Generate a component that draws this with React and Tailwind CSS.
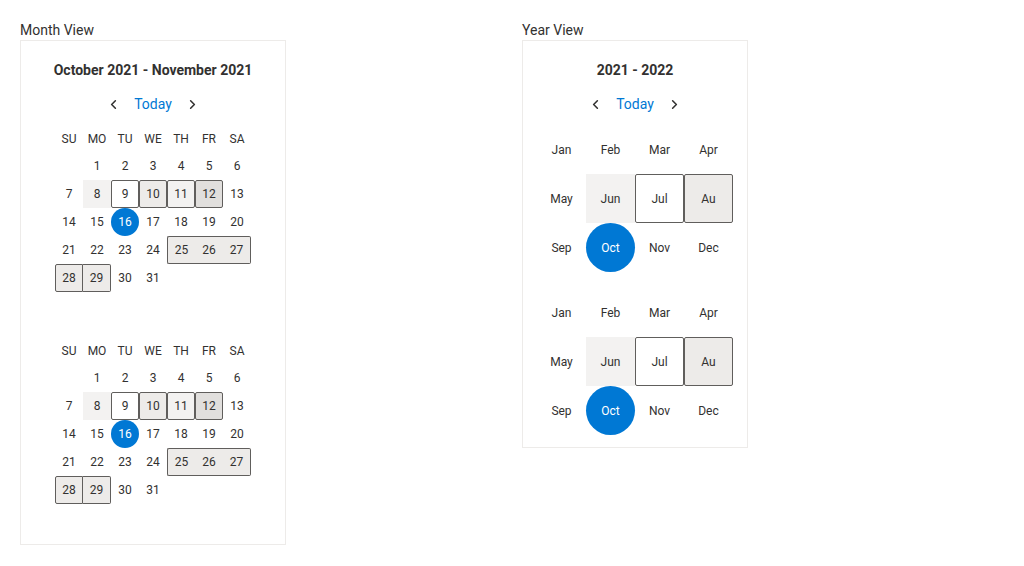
import { ChevronLeft, ChevronRight } from "lucide-react";

const DAYS = ["SU", "MO", "TU", "WE", "TH", "FR", "SA"];
const MONTHS = ["Jan", "Feb", "Mar", "Apr", "May", "Jun", "Jul", "Au", "Sep", "Oct", "Nov", "Dec"];

// per-date look, same for both months
const dayStyle = {
  8: "bg-[#f3f2f1]",
  9: "bg-white border border-[#605e5c] rounded-[2px]",
  10: "bg-[#edebe9] border border-[#605e5c] rounded-[2px]",
  11: "bg-[#f3f2f1] border border-[#605e5c] rounded-[2px]",
  12: "bg-[#e1dfdd] border border-[#605e5c] rounded-[2px]",
  16: "bg-[#0078d4] text-white rounded-full",
  25: "bg-[#edebe9] border-y border-l border-[#605e5c] rounded-l-[2px]",
  26: "bg-[#edebe9] border-y border-[#605e5c]",
  27: "bg-[#edebe9] border-y border-r border-[#605e5c] rounded-r-[2px]",
  28: "bg-[#edebe9] border border-[#605e5c] rounded-l-[2px]",
  29: "bg-[#edebe9] border-y border-r border-[#605e5c] rounded-r-[2px]",
};

const monthStyle = {
  Jun: "bg-[#f3f2f1]",
  Jul: "bg-white border border-[#605e5c] rounded-[2px]",
  Au: "bg-[#edebe9] border border-[#605e5c] rounded-[2px]",
  Oct: "bg-[#0078d4] text-white rounded-full",
};

function Nav() {
  return (
    <div className="flex items-center justify-center h-7 mt-[10px]">
      <button className="w-7 h-7 flex items-center justify-center text-[#323130]">
        <ChevronLeft size={15} strokeWidth={2.5} />
      </button>
      <button className="px-[7px] text-[14px] text-[#0078d4]">Today</button>
      <button className="w-7 h-7 flex items-center justify-center text-[#323130]">
        <ChevronRight size={15} strokeWidth={2.5} />
      </button>
    </div>
  );
}

function MonthGrid({ className }) {
  const cells = [null, ...Array.from({ length: 31 }, (_, i) => i + 1)];
  return (
    <div className={`w-[196px] mx-auto ${className}`}>
      <div className="grid grid-cols-7 h-[26px] items-center">
        {DAYS.map((d) => (
          <div key={d} className="text-center text-[12px]">{d}</div>
        ))}
      </div>
      <div className="grid grid-cols-7">
        {cells.map((n, i) => (
          <div
            key={i}
            className={`h-7 flex items-center justify-center text-[12px] ${n ? dayStyle[n] || "" : ""}`}
          >
            {n}
          </div>
        ))}
      </div>
    </div>
  );
}

function YearGrid({ className }) {
  return (
    <div className={`w-[196px] mx-auto grid grid-cols-4 ${className}`}>
      {MONTHS.map((m) => (
        <div
          key={m}
          className={`h-[49px] flex items-center justify-center text-[12px] ${monthStyle[m] || ""}`}
        >
          {m}
        </div>
      ))}
    </div>
  );
}

export default function App() {
  return (
    <div
      className="min-h-screen bg-white pt-5 pl-5 flex items-start gap-[236px] text-[#323130]"
      style={{ fontFamily: "Roboto, 'Noto Sans', sans-serif" }}
    >
      {/* Month view */}
      <div>
        <div className="h-5 text-[14px] leading-5">Month View</div>
        <div className="w-[266px] border border-[#edebe9] pt-[19px] pb-[40px]">
          <div className="h-5 text-center text-[14px] leading-5 font-bold">
            October 2021 - November 2021
          </div>
          <Nav />
          <MonthGrid className="mt-[8px]" />
          <MonthGrid className="mt-[46px]" />
        </div>
      </div>

      {/* Year view */}
      <div>
        <div className="h-5 text-[14px] leading-5">Year View</div>
        <div className="w-[226px] border border-[#edebe9] pt-[19px] pb-[12px]">
          <div className="h-5 text-center text-[14px] leading-5 font-bold">2021 - 2022</div>
          <Nav />
          <YearGrid className="mt-[7px]" />
          <YearGrid className="mt-4" />
        </div>
      </div>
    </div>
  );
}
